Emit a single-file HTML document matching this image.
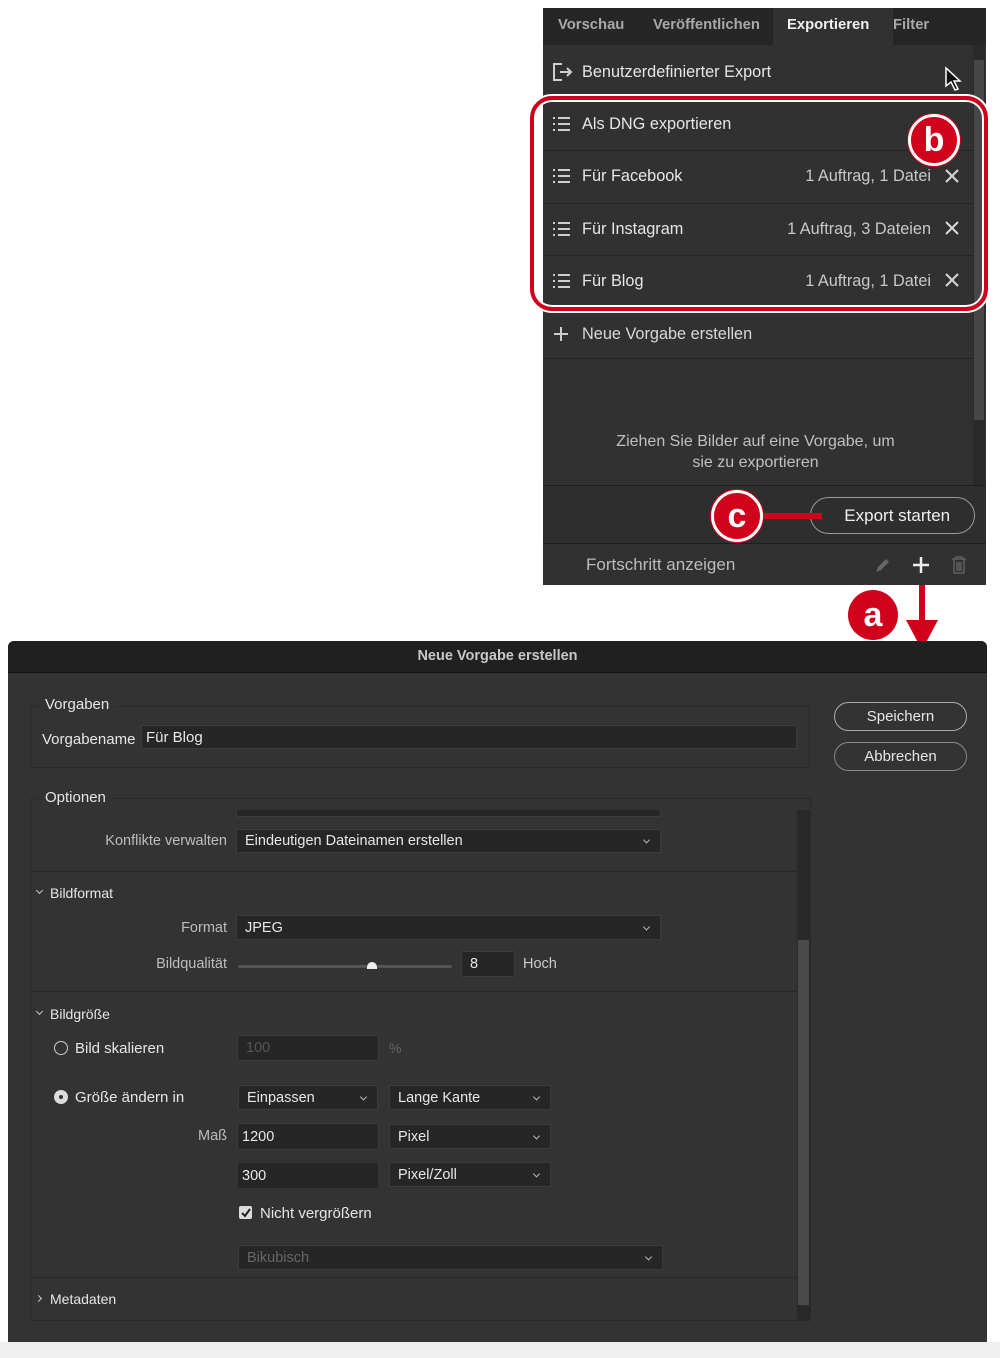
<!DOCTYPE html><html><head><meta charset="utf-8"><style>
body{margin:0;width:1000px;height:1358px;background:#fff;position:relative;overflow:hidden;font-family:"Liberation Sans",Arial,sans-serif;color:#e6e6e6}
.a{position:absolute}
.t{position:absolute;white-space:nowrap}
.sep{position:absolute;height:1px;background:#242424}
.inp{position:absolute;background:#262626;border:1px solid #3c3c3c;box-sizing:border-box;font-size:14.5px;padding:0 8px;display:flex;align-items:center;color:#e8e8e8}
.dd::after{content:"";position:absolute;right:11px;top:50%;width:4px;height:4px;border-right:1px solid #bbb;border-bottom:1px solid #bbb;transform:translateY(-70%) rotate(45deg)}
.lbl{position:absolute;font-size:14.5px;color:#bdbdbd;text-align:right}
.circ{position:absolute;border-radius:50%;background:#d0021b;border:3px solid #fff;box-shadow:0 0 0 1px #d0021b;color:#fff;font-weight:bold;font-size:34px;display:flex;align-items:center;justify-content:center;box-sizing:border-box}
.p{font-size:16.3px}
</style></head><body>
<!-- panel -->
<div class="a" style="left:543px;top:8px;width:443px;height:577px;background:#313131"></div>
<div class="a" style="left:543px;top:8px;width:443px;height:37px;background:#262626"></div>
<div class="a" style="left:773px;top:8px;width:120px;height:37px;background:#313131"></div>
<div class="t" style="left:558px;top:17px;font-size:14.8px;font-weight:bold;color:#a8a8a8">Vorschau</div>
<div class="t" style="left:653px;top:17px;font-size:14.8px;font-weight:bold;color:#a8a8a8;width:111px;overflow:hidden">Veröffentlichen</div>
<div class="t" style="left:787px;top:17px;font-size:14.8px;font-weight:bold;color:#f0f0f0">Exportieren</div>
<div class="t" style="left:893px;top:17px;font-size:14.8px;font-weight:bold;color:#a8a8a8">Filter</div>
<div class="a" style="left:973px;top:45px;width:12px;height:440px;background:#2a2a2a"></div>
<div class="a" style="left:974px;top:60px;width:10px;height:360px;background:#474747"></div>
<svg class="a" style="left:552px;top:62px" width="22" height="20"><path d="M10 2H2v16h8M8 10h11M15 6l4 4-4 4" fill="none" stroke="#cfcfcf" stroke-width="2"/></svg>
<div class="t p" style="left:582px;top:63px">Benutzerdefinierter Export</div>
<svg class="a" style="left:944px;top:66px" width="18" height="26"><path d="M2 2v18l5-4 4 8 3-1-4-8h6z" fill="#111" stroke="#fff" stroke-width="1.5"/></svg>
<div class="sep" style="left:543px;top:98px;width:430px"></div>
<div class="sep" style="left:543px;top:150px;width:430px"></div>
<div class="sep" style="left:543px;top:203px;width:430px"></div>
<div class="sep" style="left:543px;top:255px;width:430px"></div>
<div class="sep" style="left:543px;top:308px;width:430px"></div>
<div class="sep" style="left:543px;top:358px;width:430px"></div>
<svg class="a" style="left:553px;top:116px" width="18" height="18"><g fill="#cfcfcf"><rect x="0" y="1" width="2" height="2"/><rect x="0" y="7" width="2" height="2"/><rect x="0" y="13" width="2" height="2"/><rect x="5" y="1" width="12" height="2"/><rect x="5" y="7" width="12" height="2"/><rect x="5" y="13" width="12" height="2"/></g></svg>
<svg class="a" style="left:553px;top:168px" width="18" height="18"><g fill="#cfcfcf"><rect x="0" y="1" width="2" height="2"/><rect x="0" y="7" width="2" height="2"/><rect x="0" y="13" width="2" height="2"/><rect x="5" y="1" width="12" height="2"/><rect x="5" y="7" width="12" height="2"/><rect x="5" y="13" width="12" height="2"/></g></svg>
<svg class="a" style="left:553px;top:221px" width="18" height="18"><g fill="#cfcfcf"><rect x="0" y="1" width="2" height="2"/><rect x="0" y="7" width="2" height="2"/><rect x="0" y="13" width="2" height="2"/><rect x="5" y="1" width="12" height="2"/><rect x="5" y="7" width="12" height="2"/><rect x="5" y="13" width="12" height="2"/></g></svg>
<svg class="a" style="left:553px;top:273px" width="18" height="18"><g fill="#cfcfcf"><rect x="0" y="1" width="2" height="2"/><rect x="0" y="7" width="2" height="2"/><rect x="0" y="13" width="2" height="2"/><rect x="5" y="1" width="12" height="2"/><rect x="5" y="7" width="12" height="2"/><rect x="5" y="13" width="12" height="2"/></g></svg>
<div class="t p" style="left:582px;top:115px">Als DNG exportieren</div>
<div class="t p" style="left:582px;top:167px">Für Facebook</div>
<div class="t p" style="left:582px;top:220px">Für Instagram</div>
<div class="t p" style="left:582px;top:272px">Für Blog</div>
<div class="t p" style="right:69px;top:167px;color:#c8c8c8">1 Auftrag, 1 Datei</div>
<div class="t p" style="right:69px;top:220px;color:#c8c8c8">1 Auftrag, 3 Dateien</div>
<div class="t p" style="right:69px;top:272px;color:#c8c8c8">1 Auftrag, 1 Datei</div>
<svg class="a" style="left:945px;top:169px" width="14" height="120"><g stroke="#d8d8d8" stroke-width="2"><path d="M1 1l12 12M13 1L1 13"/><path d="M1 53l12 12M13 53L1 65"/><path d="M1 105l12 12M13 105L1 117"/></g></svg>
<div class="a" style="left:530px;top:96px;width:458px;height:215px;border:4px solid #d0021b;border-radius:22px;box-sizing:border-box;box-shadow:0 0 0 2px #fff,inset 0 0 0 2px #fff"></div>
<div class="circ" style="left:908px;top:114px;width:52px;height:52px">b</div>
<svg class="a" style="left:553px;top:326px" width="16" height="16"><path d="M8 1v14M1 8h14" stroke="#cfcfcf" stroke-width="2"/></svg>
<div class="t p" style="left:582px;top:325px;color:#d8d8d8">Neue Vorgabe erstellen</div>
<div class="t" style="left:543px;top:431px;width:425px;text-align:center;font-size:16px;line-height:21px;color:#c0c0c0">Ziehen Sie Bilder auf eine Vorgabe, um<br>sie zu exportieren</div>
<div class="sep" style="left:543px;top:485px;width:443px;background:#1e1e1e"></div>
<div class="a" style="left:543px;top:486px;width:443px;height:57px;background:#2e2e2e"></div>
<div class="sep" style="left:543px;top:543px;width:443px;background:#1e1e1e"></div>
<div class="a" style="left:810px;top:497px;width:165px;height:37px;border:1px solid #9a9a9a;border-radius:19px;box-sizing:border-box;display:flex;align-items:center;justify-content:center;font-size:17px;color:#f0f0f0">&nbsp;&nbsp;Export starten</div>
<div class="a" style="left:760px;top:513px;width:62px;height:6px;background:#d0021b"></div>
<div class="circ" style="left:711px;top:490px;width:52px;height:52px">c</div>
<div class="t" style="left:586px;top:555px;font-size:17px;color:#bbb">Fortschritt anzeigen</div>
<svg class="a" style="left:874px;top:558px" width="16" height="16"><path d="M2 14l2-5 8-8 3 3-8 8z" fill="#666"/></svg>
<svg class="a" style="left:912px;top:556px" width="18" height="18"><path d="M9 1v16M1 9h16" stroke="#eee" stroke-width="2.5"/></svg>
<svg class="a" style="left:951px;top:556px" width="16" height="18"><path d="M1 3h14M5 3V1h6v2M3 3v14h10V3M6 6v9M8 6v9M10 6v9" fill="none" stroke="#666" stroke-width="1.3"/></svg>
<div class="circ" style="left:848px;top:590px;width:50px;height:50px;border:none;box-shadow:none">a</div>
<div class="a" style="left:919px;top:585px;width:6px;height:40px;background:#d0021b"></div>
<svg class="a" style="left:906px;top:620px" width="32" height="30"><path d="M0 0h32L16 30z" fill="#d0021b"/></svg>
<!-- dialog -->
<div class="a" style="left:8px;top:641px;width:979px;height:701px;background:#333;border-radius:6px 6px 0 0;overflow:hidden">
<div class="a" style="left:0;top:0;width:979px;height:31px;background:#202020;border-bottom:1px solid #111"></div>
</div>
<div class="t" style="left:8px;top:648px;width:979px;text-align:center;font-size:14.5px;font-weight:bold;color:#c8c8c8">Neue Vorgabe erstellen</div>
<div class="a" style="left:0;top:1342px;width:1000px;height:16px;background:#efefef"></div>
<div class="a" style="left:30px;top:706px;width:780px;height:62px;border:1px solid #2a2a2a;box-sizing:border-box"></div>
<div class="t" style="left:38px;top:696px;font-size:15px;background:#333;padding:0 7px">Vorgaben</div>
<div class="t" style="left:42px;top:731px;font-size:15px">Vorgabename</div>
<div class="inp" style="left:141px;top:725px;width:656px;height:24px;padding-left:4px;font-size:15px">Für Blog</div>
<div class="a" style="left:834px;top:702px;width:133px;height:29px;border:1px solid #aaa;border-radius:15px;box-sizing:border-box;display:flex;align-items:center;justify-content:center;font-size:15px">Speichern</div>
<div class="a" style="left:834px;top:742px;width:133px;height:29px;border:1px solid #888;border-radius:15px;box-sizing:border-box;display:flex;align-items:center;justify-content:center;font-size:15px">Abbrechen</div>
<div class="a" style="left:30px;top:798px;width:781px;height:523px;border:1px solid #2a2a2a;box-sizing:border-box"></div>
<div class="t" style="left:38px;top:789px;font-size:15px;background:#333;padding:0 7px">Optionen</div>
<div class="a" style="left:797px;top:810px;width:13px;height:510px;background:#292929"></div>
<div class="a" style="left:798px;top:940px;width:11px;height:365px;background:#4a4a4a"></div>
<div class="a" style="left:236px;top:810px;width:425px;height:7px;background:#262626;border:1px solid #3c3c3c;border-top:none;box-sizing:border-box"></div>
<div class="lbl" style="left:60px;width:167px;top:833px">Konflikte verwalten</div>
<div class="inp dd" style="left:236px;top:829px;width:425px;height:24px">Eindeutigen Dateinamen erstellen</div>
<div class="sep" style="left:31px;top:871px;width:766px;background:#282828"></div>
<div class="a" style="left:37px;top:888px;width:4px;height:4px;border-right:1px solid #ccc;border-bottom:1px solid #ccc;transform:rotate(45deg)"></div>
<div class="t" style="left:50px;top:885px;font-size:14px">Bildformat</div>
<div class="lbl" style="left:100px;width:127px;top:920px">Format</div>
<div class="inp dd" style="left:236px;top:915px;width:425px;height:25px">JPEG</div>
<div class="lbl" style="left:100px;width:127px;top:956px">Bildqualität</div>
<div class="a" style="left:238px;top:965px;width:214px;height:3px;background:#555;border-radius:2px"></div>
<div class="a" style="left:367px;top:962px;width:10px;height:7px;background:#eee;border-radius:5px 5px 0 0"></div>
<div class="inp" style="left:461px;top:951px;width:54px;height:26px">8</div>
<div class="t" style="left:523px;top:956px;font-size:14.5px;color:#ccc">Hoch</div>
<div class="sep" style="left:31px;top:991px;width:766px;background:#282828"></div>
<div class="a" style="left:37px;top:1009px;width:4px;height:4px;border-right:1px solid #ccc;border-bottom:1px solid #ccc;transform:rotate(45deg)"></div>
<div class="t" style="left:50px;top:1006px;font-size:14px">Bildgröße</div>
<div class="a" style="left:54px;top:1041px;width:14px;height:14px;border:1.5px solid #ccc;border-radius:50%;box-sizing:border-box"></div>
<div class="t" style="left:75px;top:1040px;font-size:15px">Bild skalieren</div>
<div class="inp" style="left:237px;top:1035px;width:142px;height:26px;color:#555">100</div>
<div class="t" style="left:389px;top:1040px;font-size:14px;color:#666">%</div>
<div class="a" style="left:54px;top:1090px;width:14px;height:14px;background:#ddd;border-radius:50%"></div>
<div class="a" style="left:59px;top:1095px;width:4px;height:4px;background:#333;border-radius:50%"></div>
<div class="t" style="left:75px;top:1089px;font-size:15px">Größe ändern in</div>
<div class="inp dd" style="left:238px;top:1085px;width:140px;height:25px">Einpassen</div>
<div class="inp dd" style="left:389px;top:1085px;width:162px;height:25px">Lange Kante</div>
<div class="lbl" style="left:150px;width:77px;top:1128px">Maß</div>
<div class="inp" style="left:237px;top:1123px;width:142px;height:27px;padding-left:4px">1200</div>
<div class="inp dd" style="left:389px;top:1124px;width:162px;height:25px">Pixel</div>
<div class="inp" style="left:238px;top:1163px;width:140px;height:25px;border-color:#262626;padding-left:3px">300</div>
<div class="inp dd" style="left:389px;top:1162px;width:162px;height:25px">Pixel/Zoll</div>
<div class="a" style="left:239px;top:1206px;width:13px;height:13px;background:#ddd;border-radius:2px"></div>
<svg class="a" style="left:240px;top:1207px" width="11" height="11"><path d="M2 6l3 3 5-7" fill="none" stroke="#222" stroke-width="2"/></svg>
<div class="t" style="left:260px;top:1205px;font-size:15px">Nicht vergrößern</div>
<div class="inp dd" style="left:238px;top:1245px;width:425px;height:25px;color:#666">Bikubisch</div>
<div class="sep" style="left:31px;top:1277px;width:766px;background:#282828"></div>
<div class="a" style="left:36px;top:1296px;width:4px;height:4px;border-right:1px solid #ccc;border-bottom:1px solid #ccc;transform:rotate(-45deg)"></div>
<div class="t" style="left:50px;top:1291px;font-size:14px">Metadaten</div>
</body></html>
